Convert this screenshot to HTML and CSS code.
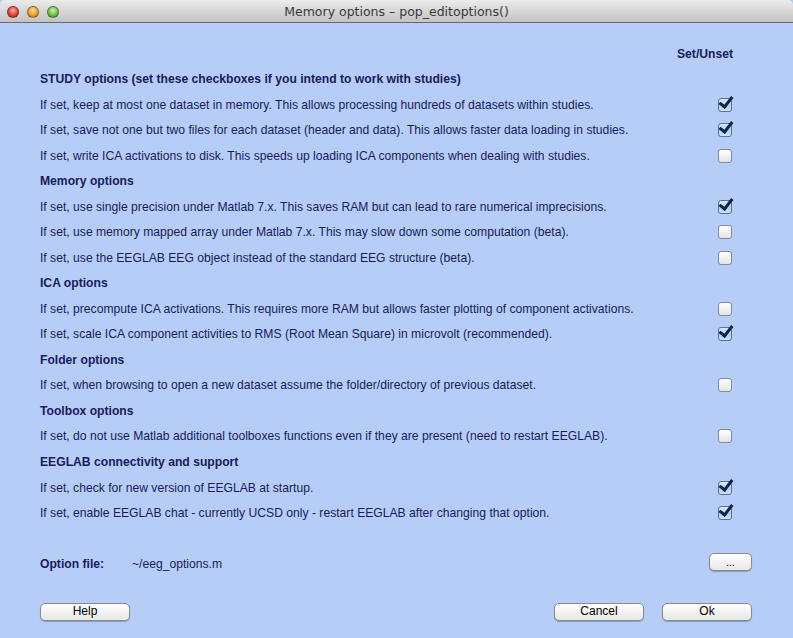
FILE: index.html
```html
<!DOCTYPE html>
<html>
<head>
<meta charset="utf-8">
<link rel="stylesheet" href="styles.css">
</head>
<body>
<div class="window">
  <div class="titlebar">
    <div class="lights">
      <span class="light red"></span>
      <span class="light yellow"></span>
      <span class="light green"></span>
    </div>
    <div class="title">Memory options – pop_editoptions()</div>
  </div>
  <div class="content">
    <div class="rows">
      <div class="row"><span></span><span class="setunset">Set/Unset</span></div>
      <div class="row head"><span>STUDY options (set these checkboxes if you intend to work with studies)</span></div>
      <div class="row"><span>If set, keep at most one dataset in memory. This allows processing hundreds of datasets within studies.</span><span class="cb on"></span></div>
      <div class="row"><span>If set, save not one but two files for each dataset (header and data). This allows faster data loading in studies.</span><span class="cb on"></span></div>
      <div class="row"><span>If set, write ICA activations to disk. This speeds up loading ICA components when dealing with studies.</span><span class="cb"></span></div>
      <div class="row head"><span>Memory options</span></div>
      <div class="row"><span>If set, use single precision under Matlab 7.x. This saves RAM but can lead to rare numerical imprecisions.</span><span class="cb on"></span></div>
      <div class="row"><span>If set, use memory mapped array under Matlab 7.x. This may slow down some computation (beta).</span><span class="cb"></span></div>
      <div class="row"><span>If set, use the EEGLAB EEG object instead of the standard EEG structure (beta).</span><span class="cb"></span></div>
      <div class="row head"><span>ICA options</span></div>
      <div class="row"><span>If set, precompute ICA activations. This requires more RAM but allows faster plotting of component activations.</span><span class="cb"></span></div>
      <div class="row"><span>If set, scale ICA component activities to RMS (Root Mean Square) in microvolt (recommended).</span><span class="cb on"></span></div>
      <div class="row head"><span>Folder options</span></div>
      <div class="row"><span>If set, when browsing to open a new dataset assume the folder/directory of previous dataset.</span><span class="cb"></span></div>
      <div class="row head"><span>Toolbox options</span></div>
      <div class="row"><span>If set, do not use Matlab additional toolboxes functions even if they are present (need to restart EEGLAB).</span><span class="cb"></span></div>
      <div class="row head"><span>EEGLAB connectivity and support</span></div>
      <div class="row"><span>If set, check for new version of EEGLAB at startup.</span><span class="cb on"></span></div>
      <div class="row"><span>If set, enable EEGLAB chat - currently UCSD only - restart EEGLAB after changing that option.</span><span class="cb on"></span></div>
    </div>
    <div class="optfile">
      <span class="optlabel">Option file:</span>
      <span class="optvalue">~/eeg_options.m</span>
      <button class="btn small">...</button>
    </div>
    <div class="buttons">
      <button class="btn">Help</button>
      <span class="spacer"></span>
      <button class="btn">Cancel</button>
      <button class="btn">Ok</button>
    </div>
  </div>
</div>
</body>
</html>
```

FILE: styles.css
```css
html, body {
  margin: 0;
  padding: 0;
  background: #b6cdf8;
}
.window {
  width: 793px;
  height: 638px;
  display: flex;
  flex-direction: column;
  background: #b6cdf8;
  font-family: "Liberation Sans", Arial, sans-serif;
  color: #1a1a60;
  overflow: hidden;
}
.titlebar {
  height: 22px;
  flex: none;
  border-bottom: 1px solid #6b6b6b;
  background: linear-gradient(#ececec, #d6d6d6 50%, #c3c3c3);
  border-radius: 5px 5px 0 0;
  position: relative;
  display: flex;
  align-items: center;
  justify-content: center;
}
.lights {
  position: absolute;
  left: 7px;
  top: 6px;
  display: flex;
  gap: 8px;
}
.light {
  width: 12px;
  height: 12px;
  border-radius: 50%;
  box-sizing: border-box;
  border: 1px solid rgba(0,0,0,0.35);
}
.red { background: radial-gradient(circle at 50% 35%, #ffb0a8, #e0443a 55%, #a8231c); }
.yellow { background: radial-gradient(circle at 50% 35%, #ffe0a0, #e8a030 55%, #b06f12); }
.green { background: radial-gradient(circle at 50% 35%, #d6f5b0, #72be4a 55%, #3f8a22); }
.title {
  font-family: "DejaVu Sans", "Open Sans", sans-serif;
  font-size: 12.5px;
  color: #3a3a3a;
  padding-left: 0;
  padding-top: 1px;
}
.content {
  flex: 1;
  display: flex;
  flex-direction: column;
  padding: 18px 0 0 40px;
}
.rows {
  display: flex;
  flex-direction: column;
}
.row {
  height: 25.53px;
  display: flex;
  align-items: center;
  justify-content: space-between;
  font-size: 12.15px;
  padding-right: 61px;
}
.head {
  font-weight: bold;
}
.setunset {
  font-weight: bold;
  margin-right: -1px;
}
.cb {
  width: 14px;
  height: 14px;
  box-sizing: border-box;
  border: 1px solid #7f8aa6;
  border-radius: 3px;
  background: linear-gradient(#ffffff, #e4e4e4);
  position: relative;
  flex: none;
}
.cb.on {
  background: linear-gradient(#d9ecfb, #a9d2f3 55%, #c9e6fb);
  border-color: #5d6f96;
}
.cb.on::after {
  content: "";
  position: absolute;
  left: 3px;
  top: -5px;
  width: 5px;
  height: 11px;
  border-right: 3px solid #15204a;
  border-bottom: 3px solid #15204a;
  transform: rotate(38deg);
  transform-origin: 50% 50%;
}
.optfile {
  display: flex;
  align-items: center;
  margin-top: 28px;
  height: 20px;
  font-size: 12.15px;
  padding-right: 41px;
}
.optlabel {
  font-weight: bold;
  width: 92px;
}
.optvalue {
  flex: 1;
}
.btn {
  font-family: "Liberation Sans", Arial, sans-serif;
  font-size: 12px;
  color: #000;
  height: 18px;
  width: 90px;
  padding: 0;
  border: 1px solid #8a8a8a;
  border-radius: 5px;
  background: linear-gradient(#ffffff, #f3f3f3 50%, #e8e8e8);
  box-shadow: 0 1px 1px rgba(0,0,0,0.25);
  line-height: 15px;
}
.btn.small {
  width: 43px;
  font-size: 10px;
  margin-top: -3px;
}
.buttons {
  display: flex;
  align-items: center;
  margin-top: 29px;
  padding-right: 41px;
  gap: 18px;
}
.spacer {
  flex: 1;
}
```
